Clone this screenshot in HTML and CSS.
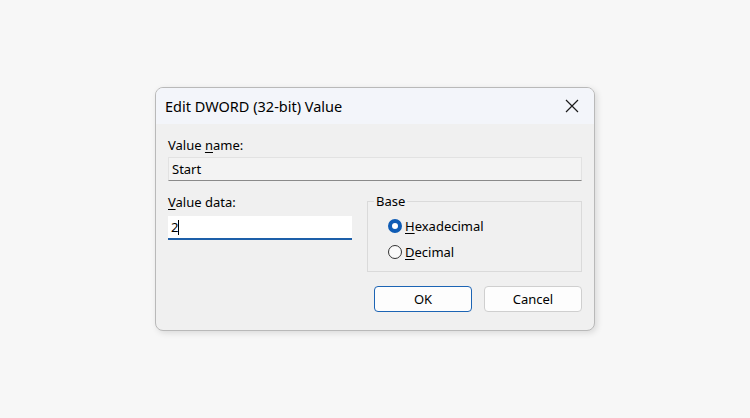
FILE: index.html
```html
<!DOCTYPE html>
<html lang="en">
  <head>
    <meta charset="UTF-8">
    <title>Edit DWORD (32-bit) Value</title>
    <link rel="stylesheet" href="styles.css">
  </head>
  <body>
    <div class="dialog">
      <div class="titlebar">
        <span class="title">Edit DWORD (32-bit) Value</span>
        <svg class="close" width="14" height="14" viewBox="0 0 14 14">
          <path d="M1 1 L13 13 M13 1 L1 13" stroke="#1b1b1b" stroke-width="1.2" fill="none"/>
        </svg>
      </div>
      <div class="content">
        <div class="label">Value <u>n</u>ame:</div>
        <div class="namefield">Start</div>
        <div class="row">
          <div class="datacol">
            <div class="label"><u>V</u>alue data:</div>
            <div class="datafield">2<span class="caret"></span></div>
          </div>
          <fieldset class="base">
            <legend>Base</legend>
            <div class="radio"><span class="dot checked"></span><span><u>H</u>exadecimal</span></div>
            <div class="radio"><span class="dot"></span><span><u>D</u>ecimal</span></div>
          </fieldset>
        </div>
        <div class="buttons">
          <button class="btn primary">OK</button>
          <button class="btn">Cancel</button>
        </div>
      </div>
    </div>
  </body>
</html>
```

FILE: styles.css
```css
html, body {
  margin: 0;
  height: 100%;
}
body {
  background-color: #f7f7f7;
  font-family: "Noto Sans", "Open Sans", sans-serif;
  color: #000;
  display: flex;
  align-items: center;
  justify-content: center;
}
.dialog {
  width: 438px;
  height: 242px;
  background-color: #f0f0f0;
  border: 1px solid #b9b9b9;
  border-radius: 8px;
  overflow: hidden;
  box-shadow: 2px 2px 6px rgba(0, 0, 0, 0.12);
}
.titlebar {
  height: 36px;
  display: flex;
  align-items: center;
  justify-content: space-between;
  padding: 0 15px 0 9px;
  background-color: #f3f5fa;
}
.title {
  font-size: 14.5px;
}
.content {
  padding: 12px 12px 0 12px;
}
.label {
  font-size: 13px;
  line-height: 18px;
}
.namefield {
  margin-top: 3px;
  line-height: 22px;
  padding-left: 3px;
  font-size: 13px;
  background-color: #f3f3f3;
  border: 1px solid #e2e2e2;
  border-bottom: 1px solid #8a8a8a;
  box-sizing: border-box;
  height: 24px;
}
.row {
  display: flex;
  margin-top: 12px;
  gap: 15px;
}
.datacol {
  width: 184px;
}
.datafield {
  margin-top: 5px;
  height: 24px;
  box-sizing: border-box;
  background-color: #fff;
  border-bottom: 2px solid #1d5fa9;
  font-size: 13px;
  line-height: 22px;
  padding-left: 3px;
}
.caret {
  display: inline-block;
  width: 1px;
  height: 15px;
  background-color: #000;
  vertical-align: -3px;
}
.base {
  flex: 1;
  margin: 0;
  padding: 0 0 0 20px;
  border: 1px solid #dadada;
  height: 79px;
  box-sizing: border-box;
}
.base legend {
  font-size: 13px;
  padding: 0 2px;
  margin-left: -14px;
  line-height: 16px;
}
.radio {
  display: flex;
  align-items: center;
  font-size: 13px;
  height: 26px;
}
.radio:first-of-type {
  margin-top: 4px;
}
.dot {
  width: 14px;
  height: 14px;
  border-radius: 50%;
  border: 1px solid #333;
  box-sizing: border-box;
  margin-right: 3px;
  background-color: #fafafa;
}
.dot.checked {
  border: 4px solid #0f5cb5;
  background-color: #fff;
}
.buttons {
  display: flex;
  justify-content: flex-end;
  gap: 12px;
  margin-top: 14px;
}
.btn {
  width: 98px;
  height: 26px;
  font-family: inherit;
  font-size: 13px;
  background-color: #fdfdfd;
  border: 1px solid #cfcfcf;
  border-radius: 4px;
  padding: 0;
}
.btn.primary {
  border-color: #1c64b4;
}
u {
  text-underline-offset: 2px;
}
```
